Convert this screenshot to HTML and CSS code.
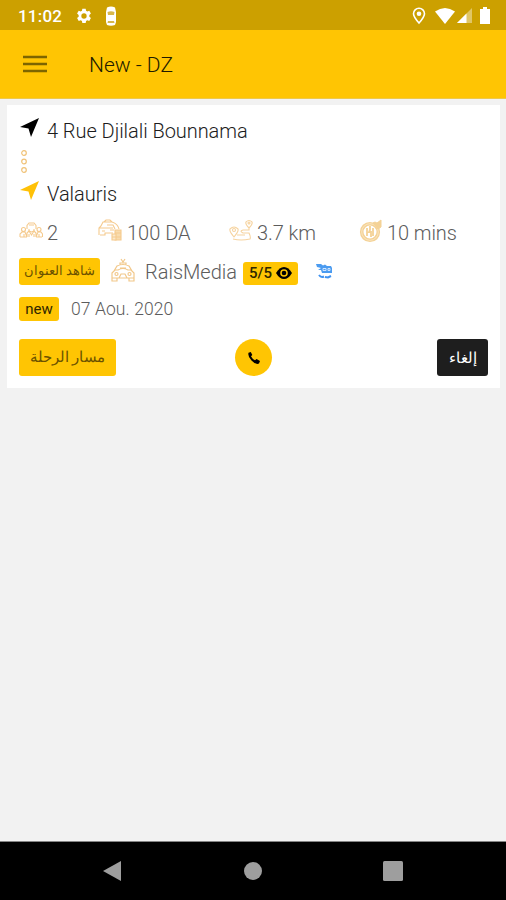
FILE: index.html
```html
<!DOCTYPE html>
<html lang="en">
<head>
<meta charset="utf-8">
<title>New - DZ</title>
<link rel="stylesheet" href="styles.css">
</head>
<body>
<div class="statusbar">
  <span class="clock">11:02</span>
  <svg class="gear" width="16" height="16" viewBox="0 0 24 24"><path fill="#fff" fill-rule="evenodd" d="M9.500 1h5l.6 3.100 1.800 1 3-1.100 2.500 4.300-2.400 2.100v2.600l2.400 2.100-2.500 4.400-3-1.100-1.800 1-.6 3.100h-5l-.6-3.100-1.800-1-3 1.100-2.500-4.400L4 13V10.400L1.600 8.300 4.100 4l3 1.100 1.800-1zM12 8a4 4 0 1 0 0 8 4 4 0 0 0 0-8z"/></svg>
  <svg class="taxi" width="12" height="20" viewBox="0 0 12 20"><path fill="#fff" d="M2 1.500Q6-.5 10 1.500L11 6v10l-1 3q-4 1.500-8 0l-1-3V6z"/><path fill="#d8b84c" d="M2.500 6q3.500-1.500 7 0L9 9H3zM3 15h6l.5 2h-7z"/></svg>
  <div class="system">
    <svg width="14" height="18" viewBox="0 0 14 18"><path fill="none" stroke="#fff" stroke-width="1.600" d="M7 16Q1.500 9.700 1.500 6.700a5.500 5.500 0 0 1 11 0Q12.500 9.700 7 16z"/><circle cx="7" cy="6.800" r="2.300" fill="#fff"/></svg>
    <svg width="20" height="16" viewBox="0 0 20 16"><path fill="#fff" d="M0 3.500q10-7 20 0L10 16z"/></svg>
    <svg width="15" height="15" viewBox="0 0 15 15"><path fill="#fff" fill-opacity=".4" d="M15 0v15H0z"/><path fill="#fff" d="M9.500 5.500V15H0z"/></svg>
    <svg width="10" height="17" viewBox="0 0 10 17"><path fill="#fff" d="M3 0h4v2h3v15H0V2h3z"/></svg>
  </div>
</div>
<header class="appbar">
  <svg width="24" height="18" viewBox="0 0 24 18"><path fill="none" stroke="#7d6500" stroke-width="2.300" d="M0 2h24M0 9h24M0 16h24"/></svg>
  <h1>New - DZ</h1>
</header>
<main>
  <article class="card">
    <div class="place">
      <svg width="20" height="20" viewBox="0 0 20 20"><path fill="#000" d="M20 0 12 19 9.500 10.500 1 9z"/></svg>
      <span class="street">4 Rue Djilali Bounnama</span>
    </div>
    <svg class="dots" width="8" height="26" viewBox="0 0 8 26"><g fill="none" stroke="#f0c277" stroke-width="1.200"><circle cx="4" cy="4" r="2.300"/><circle cx="4" cy="12.500" r="2.300"/><circle cx="4" cy="21" r="2.300"/></g></svg>
    <div class="place">
      <svg width="20" height="20" viewBox="0 0 20 20"><path fill="#ffc107" d="M20 0 12 19 9.500 10.500 1 9z"/></svg>
      <span class="town">Valauris</span>
    </div>
    <div class="stats">
      <div class="stat">
        <svg width="24" height="24" viewBox="0 0 24 24"><g fill="none" stroke="#f5ca8d" stroke-width="1.100"><circle cx="4.500" cy="10.500" r="2"/><path d="M8 10V6.500L10 4h5l2 2.500V10M10 6h5M10 10v2l2.500 1 2.500-1v-2"/><circle cx="20" cy="10.500" r="2"/><path d="M1 18v-3l2-2h3l2 5M17 18l2-5h3l1.500 2v3M8 18v-4l2-2 2.500 4 2.500-4 2 2v4M1 18h4v-3M10 18v-3M15 18v-3M20 18v-3M5 18h3M17 18h6"/></g></svg>
        <span class="n2">2</span>
      </div>
      <div class="stat">
        <svg width="25" height="24" viewBox="0 0 25 24"><g fill="none" stroke="#f5ca8d" stroke-width="1.100"><path d="M1 16V9l2-2 2-4h9q6 2 7 7M1 9h14M6 3l2-2h4l2 2M2 16h5v-2h8M4 12h3m5-1h4M9 6h6l2 4"/><path fill="#f8dcae" d="M17 11h6v10h-6z"/><path fill="#fbe8ca" d="M14 15h4v6h-4z"/><path d="M17 14h6M14 18h9"/></g></svg>
        <span class="da">100 DA</span>
      </div>
      <div class="stat">
        <svg width="24" height="24" viewBox="0 0 24 24"><g fill="none" stroke="#f6d39f" stroke-width="1.100"><path d="M20 9q-4-4-3-6 3-3 6 0 1 2-3 6zM5 18q-5-6-4-8 4-4 8 0 1 2-4 8zM4 20q8 2 17 0 1-2-1-6h-6q-4-2 0-3h6V9M8 16h8"/><circle cx="20" cy="4" r="1"/><circle cx="5" cy="11" r="1.500"/></g></svg>
        <span class="km">3.7 km</span>
      </div>
      <div class="stat">
        <svg width="24" height="24" viewBox="0 0 24 24"><g fill="none" stroke="#f4d296"><circle cx="11" cy="13" r="8.300" stroke-width="3.600"/><circle cx="11" cy="13" r="8.300" stroke="#fbeacb" stroke-width=".8"/><path stroke-width="1.800" d="M8 9v8M11 7v4l-1 2h2v5M14 9v8"/><path fill="#f4d296" d="m14 4 2-1 2 1 4-3v7l-3 2z"/></g></svg>
        <span class="mins">10 mins</span>
      </div>
    </div>
    <div class="driver">
      <span class="tag address" lang="ar" dir="rtl">شاهد العنوان</span>
      <svg class="cab" width="24" height="24" viewBox="0 0 24 24"><g fill="none" stroke="#f2c88a" stroke-width="1.200"><path d="M3 13 6 8q6-3 12 0l3 5M1 15l3-3h3q5-3 10 0h3l3 3v5H1zM1 20v3h5v-3M18 20v3h5v-3M9 7V5h6v2M10 1l2 3 2-3M8 20l2-4h4l2 4M9 10h6"/><circle cx="5.500" cy="16" r="1.500"/><circle cx="18.500" cy="16" r="1.500"/></g></svg>
      <span class="name">RaisMedia</span>
      <span class="tag rating"><span>5/5</span><svg width="16" height="12" viewBox="0 0 16 12"><path d="M0 6q3.500-6 8-6t8 6q-3.500 6-8 6T0 6z"/><circle cx="8" cy="6" r="3.800" fill="#ffc503"/><circle cx="8" cy="6" r="2.300"/></svg></span>
      <svg class="car" width="17" height="16" viewBox="0 0 17 16"><path fill="#4b9bf0" d="M0 1h5l2 1.500 2-1 2 1.500h4l1 2v5H6L5 7H2l3-2-4-1z"/><path fill="none" stroke="#cfe5ff" d="M7 5.500h3v2H7zM12 5.500h2v2h-2z"/><path fill="none" stroke="#3f92f1" stroke-width="2" d="M3 12q2 3 5 1.500M9 14l3 .5 3-1.500"/></svg>
    </div>
    <div class="when">
      <span class="tag new">new</span>
      <span class="date">07 Aou. 2020</span>
    </div>
    <div class="actions">
      <span class="button route" lang="ar" dir="rtl">مسار الرحلة</span>
      <span class="call"><svg width="12" height="12" viewBox="0 0 12 12"><path d="M.5.800 2.800 0 4.300 3 3 4.300q1.300 2.700 4 4L8.600 7 12 9l-1 2.500Q8 13 3.500 8.500-.5 4 .5.800z"/></svg></span>
      <span class="button cancel" lang="ar" dir="rtl">إلغاء</span>
    </div>
  </article>
</main>
<nav class="navbar">
  <svg width="20" height="22" viewBox="0 0 20 22"><path fill="#9e9e9e" d="M19 1v20L1 11z"/></svg>
  <svg width="18" height="18" viewBox="0 0 18 18"><circle cx="9" cy="9" r="9" fill="#9e9e9e"/></svg>
  <svg width="20" height="20" viewBox="0 0 20 20"><rect width="20" height="20" rx="1.500" fill="#9e9e9e"/></svg>
</nav>
</body>
</html>
```

FILE: styles.css
```css
* { box-sizing: border-box; }
body {
  margin: 0;
  height: 900px;
  display: flex;
  flex-direction: column;
  overflow: hidden;
  background: #f2f2f2;
  color: #5c5c5c;
  font-family: Roboto, "DejaVu Sans", sans-serif;
  font-size: 20px;
  font-weight: 350;
  white-space: nowrap;
}
svg { display: block; flex: none; }
.statusbar {
  height: 30px;
  flex: none;
  display: flex;
  align-items: center;
  padding: 1px 16px 0 18px;
  background: #cca000;
  color: #fff;
}
.clock { width: 58px; font-size: 17px; font-weight: 500; letter-spacing: 0.2px; }
.taxi { margin-left: 13px; }
.system { margin-left: auto; display: flex; align-items: center; }
.system svg:nth-child(2) { margin-left: 9px; }
.system svg:nth-child(3) { margin-left: 2px; }
.system svg:nth-child(4) { margin-left: 8px; }
.appbar {
  height: 69px;
  flex: none;
  display: flex;
  align-items: center;
  gap: 42px;
  padding-left: 23px;
  background: #ffc503;
  border-bottom: 1px solid #edc84c;
}
h1 { margin: 2px 0 0; color: #201a00; font-size: 21px; font-weight: 350; }
main { flex: 1; padding: 6px 6px 0 7px; }
.card { height: 283px; padding: 10px 12px 0; background: #fff; }
.place { height: 32px; display: flex; align-items: center; gap: 8px; color: #1c1c1c; }
.place svg { margin: -7px 0 0; }
.street { letter-spacing: -0.05px; }
.dots { margin: 2px 0 3px 1px; }
.stats { margin-top: 7px; height: 32px; display: grid; grid-template-columns: 79px 131px 130px 1fr; }
.stat { display: flex; align-items: center; gap: 4px; }
.stat svg { margin-top: -5px; }
.km, .mins { letter-spacing: -0.1px; }
.driver { margin-top: 7px; height: 32px; display: flex; align-items: center; }
.tag {
  display: flex;
  align-items: center;
  justify-content: center;
  border-radius: 3px;
  background: #ffc503;
  color: #302700;
}
.address { width: 81px; height: 27px; margin-top: -2px; padding-bottom: 2px; font-size: 13px; color: #6b5200; }
.cab { margin: -5px 10px 0 11px; }
.name { width: 92px; }
.rating { width: 55px; height: 23px; margin: 2px 0 0 6px; gap: 4px; font-size: 15px; font-weight: 500; }
.car { margin: -2px 0 0 18px; }
.when { height: 42px; display: flex; align-items: center; gap: 12px; }
.new { width: 40px; height: 24px; font-size: 15px; font-weight: 400; }
.date { font-size: 17.500px; letter-spacing: 0.1px; }
.actions { margin-top: 9px; height: 37px; display: flex; }
.button { height: 37px; display: flex; align-items: center; justify-content: center; border-radius: 3px; }
.route { width: 97px; background: #ffc503; color: #6b5200; font-size: 14.500px; }
.call { width: 37px; height: 37px; margin-left: 119px; display: flex; align-items: center; justify-content: center; border-radius: 50%; background: #ffc503; }
.cancel { width: 51px; margin-left: auto; background: #1e1e1e; color: #fff; font-size: 15px; }
.navbar {
  height: 59px;
  flex: none;
  display: flex;
  align-items: center;
  justify-content: space-between;
  padding: 0 103px 0 102px;
  background: #000;
  border-top: 1px solid #858585;
}
```
